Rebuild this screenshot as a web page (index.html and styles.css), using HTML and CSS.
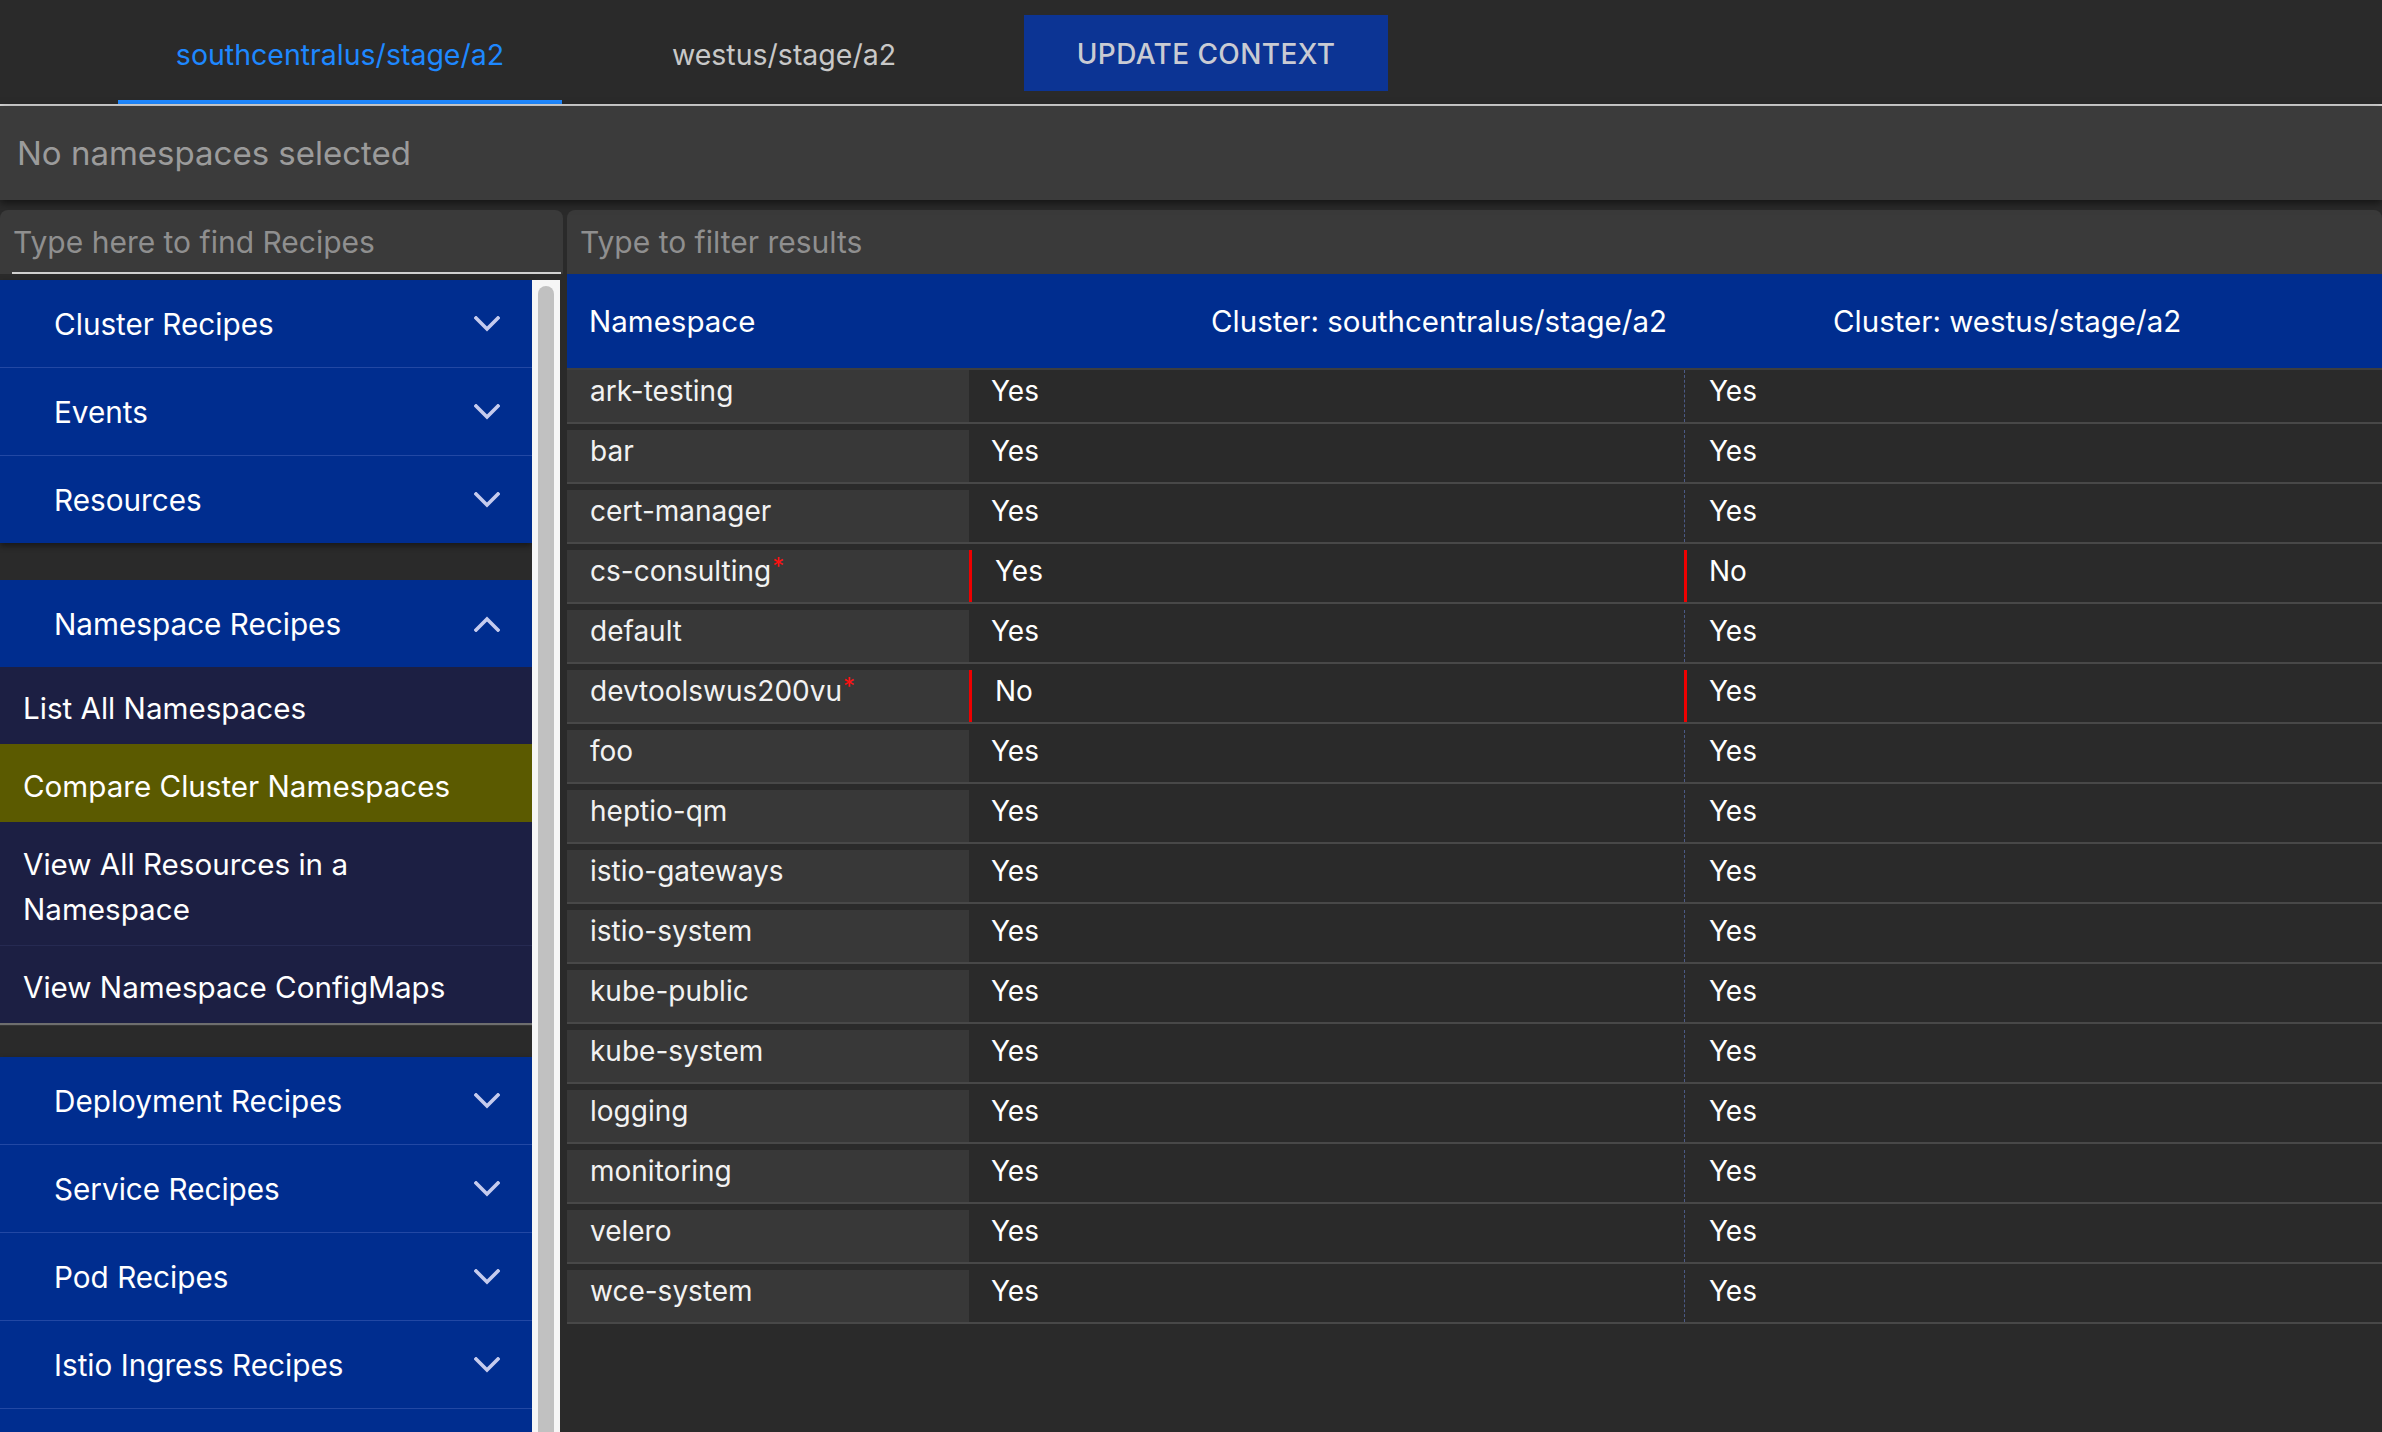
FILE: index.html
```html
<!DOCTYPE html>
<html>
<head>
<meta charset="utf-8">
<link rel="stylesheet" href="styles.css">
</head>
<body>
<header class="topbar">
  <nav class="tabs">
    <div class="tab active">southcentralus/stage/a2</div>
    <div class="tab">westus/stage/a2</div>
  </nav>
  <button class="update">UPDATE CONTEXT</button>
</header>
<div class="banner">No namespaces selected</div>
<main class="main">
  <aside class="left">
    <div class="search"><span class="ph">Type here to find Recipes</span></div>
    <div class="sidebar-wrap">
      <div class="sidebar">
        <div class="group">
          <div class="ghead"><span>Cluster Recipes</span><svg class="chev" viewBox="0 0 26 16"><polyline points="2,2 13,13 24,2"/></svg></div>
          <div class="ghead"><span>Events</span><svg class="chev" viewBox="0 0 26 16"><polyline points="2,2 13,13 24,2"/></svg></div>
          <div class="ghead"><span>Resources</span><svg class="chev" viewBox="0 0 26 16"><polyline points="2,2 13,13 24,2"/></svg></div>
        </div>
        <div class="group open">
          <div class="ghead"><span>Namespace Recipes</span><svg class="chev" viewBox="0 0 26 16"><polyline points="2,14 13,3 24,14"/></svg></div>
          <div class="sub">
            <div class="item">List All Namespaces</div>
            <div class="item selected">Compare Cluster Namespaces</div>
            <div class="item">View All Resources in a<br>Namespace</div>
            <div class="item">View Namespace ConfigMaps</div>
          </div>
        </div>
        <div class="group">
          <div class="ghead"><span>Deployment Recipes</span><svg class="chev" viewBox="0 0 26 16"><polyline points="2,2 13,13 24,2"/></svg></div>
          <div class="ghead"><span>Service Recipes</span><svg class="chev" viewBox="0 0 26 16"><polyline points="2,2 13,13 24,2"/></svg></div>
          <div class="ghead"><span>Pod Recipes</span><svg class="chev" viewBox="0 0 26 16"><polyline points="2,2 13,13 24,2"/></svg></div>
          <div class="ghead"><span>Istio Ingress Recipes</span><svg class="chev" viewBox="0 0 26 16"><polyline points="2,2 13,13 24,2"/></svg></div>
          <div class="ghead empty"></div>
        </div>
      </div>
      <div class="scrollbar"><div class="thumb"></div></div>
    </div>
  </aside>
  <section class="right">
    <div class="filter"><span class="ph">Type to filter results</span></div>
    <div class="table">
      <div class="thead">
        <div class="th">Namespace</div>
        <div class="th">Cluster: southcentralus/stage/a2</div>
        <div class="th">Cluster: westus/stage/a2</div>
      </div>
      <div class="row"><div class="name">ark-testing</div><div class="c2">Yes</div><div class="c3">Yes</div></div>
      <div class="row"><div class="name">bar</div><div class="c2">Yes</div><div class="c3">Yes</div></div>
      <div class="row"><div class="name">cert-manager</div><div class="c2">Yes</div><div class="c3">Yes</div></div>
      <div class="row diff"><div class="name">cs-consulting<span class="req">*</span></div><div class="c2">Yes</div><div class="c3">No</div></div>
      <div class="row"><div class="name">default</div><div class="c2">Yes</div><div class="c3">Yes</div></div>
      <div class="row diff"><div class="name">devtoolswus200vu<span class="req">*</span></div><div class="c2">No</div><div class="c3">Yes</div></div>
      <div class="row"><div class="name">foo</div><div class="c2">Yes</div><div class="c3">Yes</div></div>
      <div class="row"><div class="name">heptio-qm</div><div class="c2">Yes</div><div class="c3">Yes</div></div>
      <div class="row"><div class="name">istio-gateways</div><div class="c2">Yes</div><div class="c3">Yes</div></div>
      <div class="row"><div class="name">istio-system</div><div class="c2">Yes</div><div class="c3">Yes</div></div>
      <div class="row"><div class="name">kube-public</div><div class="c2">Yes</div><div class="c3">Yes</div></div>
      <div class="row"><div class="name">kube-system</div><div class="c2">Yes</div><div class="c3">Yes</div></div>
      <div class="row"><div class="name">logging</div><div class="c2">Yes</div><div class="c3">Yes</div></div>
      <div class="row"><div class="name">monitoring</div><div class="c2">Yes</div><div class="c3">Yes</div></div>
      <div class="row"><div class="name">velero</div><div class="c2">Yes</div><div class="c3">Yes</div></div>
      <div class="row"><div class="name">wce-system</div><div class="c2">Yes</div><div class="c3">Yes</div></div>
    </div>
  </section>
</main>
</body>
</html>
```
FILE: styles.css
```css
* { box-sizing: border-box; }
html, body { margin: 0; padding: 0; }
body {
  background: #2a2a2a;
  font-family: "Inter", "Roboto", "Liberation Sans", sans-serif;
  color: #fff;
  width: 2382px;
  height: 1432px;
  overflow: hidden;
}

/* top bar */
.topbar {
  height: 106px;
  display: flex;
  align-items: center;
  padding-left: 118px;
  border-bottom: 2px solid #d6d6d6;
  background: #2a2a2a;
}
.tabs { display: flex; height: 104px; }
.tab {
  width: 444px;
  height: 104px;
  display: flex;
  align-items: center;
  justify-content: center;
  font-size: 28.5px;
  color: #c8c8c8;
  padding-top: 4px;
}
.tab.active {
  color: #1e88ff;
  border-bottom: 4px solid #1e88ff;
  padding-top: 8px;
}
.update {
  margin-left: 18px;
  width: 364px;
  height: 76px;
  background: #0c3494;
  border: none;
  color: #c9cbd3;
  font-family: inherit;
  font-size: 28px;
  font-weight: 500;
  letter-spacing: 0.4px;
  margin-top: 2px;
  padding: 2px 0 0;
}

/* banner */
.banner {
  height: 94px;
  background: #3b3b3b;
  color: #9b9b9b;
  font-size: 33px;
  display: flex;
  align-items: center;
  padding-left: 17px;
  box-shadow: 0 3px 8px rgba(0,0,0,0.55);
  position: relative;
}

/* main */
.main {
  display: flex;
  gap: 4px;
  margin-top: 10px;
}
.left { width: 563px; flex: none; }
.search {
  height: 64px;
  background: #3a3a3a;
  border-radius: 8px 8px 0 0;
  padding: 0 0 0 13px;
  display: flex;
  align-items: center;
  position: relative;
}
.search::after {
  content: "";
  position: absolute;
  left: 12px;
  right: 2px;
  bottom: 0;
  height: 2px;
  background: #d0d0d0;
}
.ph { color: #8f8f8f; font-size: 30px; }

.sidebar-wrap {
  display: flex;
  margin-top: 6px;
  width: 560px;
  height: 1160px;
}
.sidebar { width: 532px; flex: none; }
.scrollbar {
  width: 28px;
  flex: none;
  background: #f6f6f6;
  padding: 6px 6px 0 6px;
}
.thumb {
  height: 1200px;
  background: #c1c1c1;
  border-radius: 8px;
}

.group {
  background: #002d8f;
  box-shadow: 0 3px 6px rgba(0,0,0,0.45);
}
.group + .group { margin-top: 37px; }
.group.open + .group { margin-top: 34px; }
.group.open { box-shadow: 0 2px 1px rgba(140,140,140,0.7); }
.ghead {
  height: 88px;
  display: flex;
  align-items: center;
  justify-content: space-between;
  padding: 0 32px 0 54px;
  font-size: 29.7px;
  border-top: 1px solid #2248a4;
}
.ghead:first-child { border-top: none; height: 87px; }
.chev {
  width: 26px;
  height: 16px;
  fill: none;
  stroke: #c5cbee;
  stroke-width: 3.6;
  stroke-linecap: square;
}
.sub { background: #1c1f43; }
.item {
  padding: 19px 20px 13px 23px;
  line-height: 45px;
  font-size: 29.6px;
  border-top: 1px solid #262a52;
}
.item:first-child { border-top: none; }
.item.selected { background: #5b5a00; border-top-color: #5b5a00; }
.item.selected + .item { border-top-color: #1c1f43; }

/* right */
.right { flex: 1; min-width: 0; }
.filter {
  height: 64px;
  background: #3a3a3a;
  border-radius: 8px 8px 0 0;
  padding-left: 13px;
  display: flex;
  align-items: center;
}
.thead {
  display: grid;
  grid-template-columns: 622px 622px 1fr;
  height: 96px;
  background: #002d8f;
  align-items: center;
  border-bottom: 2px solid #3e3e3e;
}
.th { padding-left: 22px; font-size: 29.5px; }
.row {
  display: grid;
  grid-template-columns: 402px 715px 1fr;
  height: 54px;
  border-bottom: 2px solid #484848;
  margin-bottom: 6px;
  font-size: 28px;
  line-height: 36px;
}
.row > div { padding-top: 3px; }
.name {
  background: #383838;
  padding-left: 23px;
  color: #f2f2f2;
}
.c2 {
  padding-left: 22px;
  color: #fff;
}
.c3 {
  border-left: 1px dashed #4b5a86;
  padding-left: 24px;
  color: #fff;
}
.row.diff .c2 { border-left: 3px solid #ee0000; padding-left: 23px; }
.row.diff .c3 { border-left: 3px solid #ee0000; padding-left: 22px; }
.req {
  color: #ff1111;
  font-size: 24px;
  vertical-align: top;
  line-height: 28px;
  margin-left: 1px;
}
```
